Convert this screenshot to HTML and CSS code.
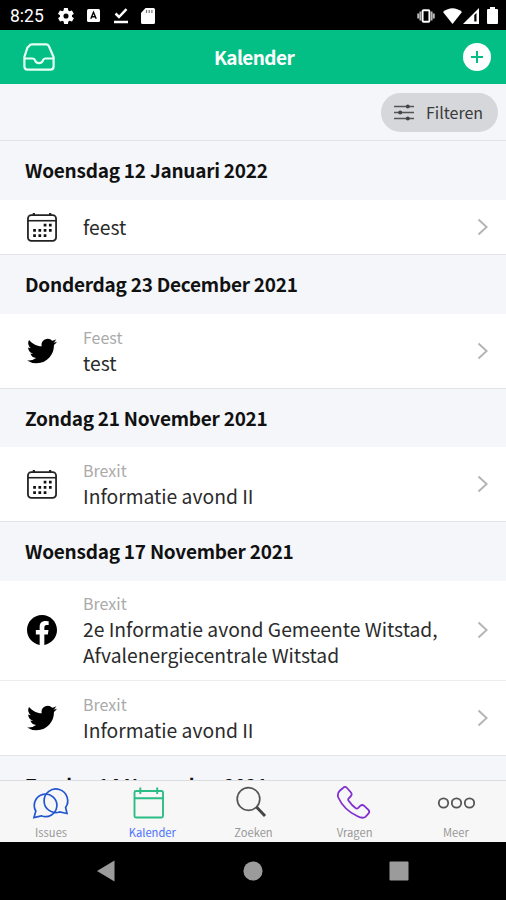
FILE: index.html
```html
<!DOCTYPE html>
<html lang="nl">
<head>
<meta charset="utf-8">
<title>Kalender</title>
<link rel="stylesheet" href="styles.css">
</head>
<body>
<svg class="defs" aria-hidden="true">
  <symbol id="calendar" viewBox="0 0 32 32">
    <g fill="none" stroke="#222" stroke-width="1.9">
      <rect x="1" y="3.4" width="30" height="27.4" rx="3.6"/>
      <path d="M1 9.300h30" stroke-width="1.7"/>
      <path d="M7.3 1v3M24.7 1v3" stroke-width="2.4"/>
    </g>
    <path fill="none" stroke="#111" stroke-width="2.7" stroke-dasharray="2.900 2.7" d="M17.800 14h9M6.600 19.600h20M6.600 25.200h14.400"/>
  </symbol>
  <symbol id="twitter" viewBox="0 0 24 24">
    <path d="M23.95 4.57a10 10 0 0 1-2.82.77 4.96 4.96 0 0 0 2.16-2.72c-.95.55-2 .95-3.13 1.18a4.92 4.92 0 0 0-8.38 4.48C7.69 8.1 4.07 6.13 1.64 3.16a4.92 4.92 0 0 0 1.52 6.57 4.9 4.9 0 0 1-2.23-.61v.06c0 2.38 1.7 4.37 3.95 4.83a5 5 0 0 1-2.21.08 4.94 4.94 0 0 0 4.6 3.42A9.87 9.87 0 0 1 0 19.54a13.99 13.99 0 0 0 7.55 2.21c9.05 0 14-7.5 14-13.98 0-.21 0-.42-.02-.63a9.94 9.94 0 0 0 2.46-2.55z"/>
  </symbol>
  <symbol id="facebook" viewBox="0 0 24 24">
    <path d="M24 12.07C24 5.45 18.63.07 12 .07S0 5.45 0 12.07c0 5.99 4.39 10.95 10.13 11.86v-8.39H7.08v-3.47h3.05V9.43c0-3.01 1.79-4.67 4.53-4.67 1.31 0 2.68.24 2.68.24v2.95h-1.51c-1.49 0-1.95.93-1.95 1.87v2.25h3.32l-.53 3.47h-2.8v8.39C19.61 23.02 24 18.06 24 12.07z"/>
  </symbol>
  <symbol id="chevron" viewBox="0 0 12 18">
    <path d="M1.5 1.5L9.6 9l-8.1 7.5" fill="none" stroke="#b4b4b4" stroke-width="1.9"/>
  </symbol>
</svg>
<div class="screen">
  <div class="status">
    <span class="clock">8:25</span>
    <svg class="st-gear" viewBox="2 2 20 20"><path fill="#fff" d="M19.4 13c0-.3.1-.6.1-1s0-.7-.1-1l2.1-1.600c.2-.2.200-.4.100-.6l-2-3.500c-.1-.2-.4-.3-.6-.2l-2.500 1c-.5-.4-1.100-.7-1.700-1l-.4-2.600c0-.3-.2-.5-.5-.5h-4c-.3 0-.5.2-.5.4l-.4 2.700c-.6.2-1.100.6-1.700 1l-2.500-1c-.2-.1-.5 0-.6.200l-2 3.500c-.1.2-.1.5.1.600L4.500 11c0 .3-.1.6-.1 1s0 .7.1 1l-2.100 1.600c-.2.2-.2.4-.1.600l2 3.500c.1.2.4.3.6.2l2.500-1c.5.4 1.100.7 1.700 1l.4 2.600c0 .3.2.5.5.5h4c.3 0 .5-.2.5-.4l.4-2.700c.6-.2 1.100-.6 1.700-1l2.500 1c.2.1.5 0 .6-.2l2-3.500c.1-.2.1-.5-.1-.600zM12 15.200A3.200 3.200 0 1 1 12 8.800a3.200 3.200 0 0 1 0 6.400z"/></svg>
    <svg class="st-a" viewBox="0 0 13 13"><rect width="13" height="13" rx="1.500" fill="#fff"/><path d="M3.800 9.700L6.500 3.300l2.700 6.400M4.800 7.800h3.400" fill="none" stroke="#000" stroke-width="1.400"/></svg>
    <svg class="st-check" viewBox="0 0 14 16"><path d="M1.500 5.500l3.500 3.500 7.500-7.800M0 14h14" fill="none" stroke="#fff" stroke-width="2.500"/></svg>
    <svg class="st-sd" viewBox="0 0 14 16"><path fill="#fff" d="M4.500 0H12.500Q14 0 14 1.500v13Q14 16 12.500 16h-11Q0 16 0 14.500V5z"/><path d="M5.500 2v3M8.200 2v3M10.900 2v3" stroke="#777" stroke-width="1.200"/></svg>
    <span class="spring"></span>
    <svg class="st-vib" viewBox="0 0 18 14"><rect x="5.600" y="1.200" width="6.800" height="11.600" rx="1" fill="none" stroke="#fff" stroke-width="1.900"/><path d="M3.400 2.500v9M14.600 2.500v9M1.200 4.500v5M16.800 4.500v5" stroke="#bbb" stroke-width="1.900"/></svg>
    <svg class="st-wifi" viewBox="0 0 19 16"><path fill="#fff" d="M0 4Q9.500-3.500 19 4L9.500 16z"/></svg>
    <svg class="st-cell" viewBox="0 0 16 16"><path fill="#fff" fill-rule="evenodd" d="M0 16L16 0v16zM11.300 7v6.500h2.200V5z"/></svg>
    <svg class="st-bat" viewBox="0 0 11 17"><path fill="#fff" d="M3 0h5v2h2q1 0 1 1v13q0 1-1 1H1q-1 0-1-1V3q0-1 1-1h2z"/></svg>
  </div>
  <header class="appbar">
    <svg class="inbox" viewBox="0 0 32 28"><path d="M6.200 3Q7 1.300 9 1.300h14Q25 1.300 25.800 3L30.600 14v9.500q0 3.200-3.200 3.200H4.600q-3.200 0-3.200-3.200V14L4.500 4.500zM1.400 15.500h8.300q1.800 0 2.300 1.800.8 2.900 4 2.900t4-2.900q.5-1.800 2.300-1.800h8.300" fill="none" stroke="#e6fff3" stroke-width="2.200"/></svg>
    <h1>Kalender</h1>
    <svg class="add" viewBox="0 0 28 28"><circle cx="14" cy="14" r="14" fill="#fff"/><path d="M8 14h12M14 8v12" stroke="#03bf86" stroke-width="2"/></svg>
  </header>
  <div class="filterbar">
    <button class="filter">
      <svg viewBox="0 0 20 17"><path d="M0 2.500h20M0 8.500h20M0 14.500h20" stroke="#555" stroke-width="1.300"/><circle cx="13.800" cy="2.500" r="2" fill="#444"/><circle cx="6.200" cy="8.500" r="2" fill="#444"/><circle cx="13.800" cy="14.500" r="2" fill="#444"/></svg>
      <span>Filteren</span>
    </button>
  </div>
  <main class="list">
    <h2>Woensdag 12 Januari 2022</h2>
    <div class="row single"><svg class="ico"><use href="#calendar"/></svg><div class="txt"><p>feest</p></div><svg class="chev"><use href="#chevron"/></svg></div>
    <h2>Donderdag 23 December 2021</h2>
    <div class="row"><svg class="ico"><use href="#twitter"/></svg><div class="txt"><small>Feest</small><p>test</p></div><svg class="chev"><use href="#chevron"/></svg></div>
    <h2>Zondag 21 November 2021</h2>
    <div class="row"><svg class="ico"><use href="#calendar"/></svg><div class="txt"><small>Brexit</small><p>Informatie avond II</p></div><svg class="chev"><use href="#chevron"/></svg></div>
    <h2>Woensdag 17 November 2021</h2>
    <div class="row double"><svg class="ico"><use href="#facebook"/></svg><div class="txt"><small>Brexit</small><p>2e Informatie avond Gemeente Witstad,<br>Afvalenergiecentrale Witstad</p></div><svg class="chev"><use href="#chevron"/></svg></div>
    <div class="row divided"><svg class="ico"><use href="#twitter"/></svg><div class="txt"><small>Brexit</small><p>Informatie avond II</p></div><svg class="chev"><use href="#chevron"/></svg></div>
    <h2>Zondag 14 November 2021</h2>
  </main>
  <nav class="tabs">
    <a><svg viewBox="1.500 0 38 34"><g fill="none" stroke="#2457cf" stroke-width="1.700"><path d="M3.500 31.500l1.800-6.500a11.300 11.300 0 1 1 5.500 4.800z"/><path d="M36.500 27.500l-1.400-6a11.800 11.800 0 1 0-6 4.500z"/></g></svg><span>Issues</span></a>
    <a class="on"><svg viewBox="3 0 38 34"><g fill="none" stroke="#2bbd86" stroke-width="1.900"><rect x="4.500" y="5" width="28.500" height="26.500" rx="1.500"/><path d="M4.500 12.200h28.500M10.300 1.500v6.500M27.200 1.500v6.500"/></g></svg><span>Kalender</span></a>
    <a><svg viewBox="1 0 38 34"><circle cx="15.500" cy="13" r="11.300" fill="none" stroke="#555" stroke-width="1.700"/><path d="M23.500 21l8.500 9" stroke="#444" stroke-width="2.900"/></svg><span>Zoeken</span></a>
    <a><svg viewBox="1 0 38 34"><path d="M5 4.500L8 2Q10-.2 12 2l4 4.500q1.500 2-.5 4l-2 2q-.8 1 .3 2.600 3 4.300 6.700 7 1.500 1 2.500 0l2.200-2.200q2-1.700 4 0l4 3.700q2 2 .2 4l-2.700 3Q28 33 22.500 30.300 9 24 3.300 11.500 1.800 7.500 5 4.500z" fill="none" stroke="#8230cf" stroke-width="1.800"/></svg><span>Vragen</span></a>
    <a><svg viewBox="-1 0 38 34"><g fill="none" stroke="#555" stroke-width="1.800"><circle cx="5.500" cy="17" r="4.700"/><circle cx="18.500" cy="17" r="4.700"/><circle cx="31.500" cy="17" r="4.700"/></g></svg><span>Meer</span></a>
  </nav>
  <div class="sysnav">
    <svg viewBox="0 0 20 22"><path d="M1 11L18.500.5v21z" fill="#9b9b9b"/></svg>
    <svg viewBox="0 0 20 20"><circle cx="10" cy="10" r="9.600" fill="#9b9b9b"/></svg>
    <svg viewBox="0 0 20 20"><rect x=".5" y=".5" width="19" height="19" rx="1" fill="#9b9b9b"/></svg>
  </div>
</div>
</body>
</html>
```
FILE: styles.css
```css
* { box-sizing: border-box; margin: 0; padding: 0; }
body {
  width: 506px;
  height: 900px;
  overflow: hidden;
  background: #000;
  font-family: "Noto Sans CJK JP", "Noto Sans", sans-serif;
  color: #2b2b2b;
}
svg { display: block; flex: none; }
.defs { display: none; }
.screen { height: 900px; display: flex; flex-direction: column; }

.status {
  height: 30px;
  display: flex;
  align-items: center;
  padding: 1px 8px 0 10px;
  background: #000;
}
.clock { font: 17.5px/20px Roboto, sans-serif; color: #fff; width: 48px; }
.spring { flex: 1; }
.st-gear { width: 16px; height: 16px; }
.st-a { width: 13px; height: 13px; margin-left: 13px; }
.st-check { width: 14px; height: 16px; margin-left: 14px; }
.st-sd { width: 14px; height: 16px; margin-left: 13px; }
.st-vib { width: 18px; height: 14px; }
.st-wifi { width: 19px; height: 16px; margin-left: 8px; }
.st-cell { width: 16px; height: 16px; margin-left: 1px; }
.st-bat { width: 11px; height: 17px; margin-left: 8px; }

.appbar {
  height: 54px;
  display: flex;
  align-items: center;
  justify-content: space-between;
  padding: 0 15px 0 23px;
  background: #03bf86;
}
.inbox { width: 32px; height: 28px; }
.add { width: 28px; height: 28px; }
h1 {
  padding-right: 10px;
  font-size: 19px;
  line-height: 28px;
  font-weight: 700;
  letter-spacing: -.6px;
  color: #fff;
}

.filterbar {
  height: 56.3px;
  display: flex;
  justify-content: flex-end;
  align-items: center;
  padding-right: 8px;
  background: #f4f6fa;
}
.filter {
  width: 117px;
  height: 39px;
  display: flex;
  align-items: center;
  gap: 12px;
  padding: 0 0 0 13px;
  border: 0;
  border-radius: 20px;
  background: #d5d7da;
  font-family: inherit;
  font-size: 16px;
  color: #3a3a3a;
}
.filter svg { width: 20px; height: 17px; }
.filter span { line-height: 24px; }

.list { flex: 1; overflow: hidden; background: #fff; }
h2 {
  height: 59.4px;
  padding-left: 25px;
  border-top: 1px solid #e2e4e8;
  background: #f4f6fa;
  font-size: 19px;
  line-height: 58px;
  font-weight: 700;
  letter-spacing: -.24px;
  color: #111;
  white-space: nowrap;
}
.row {
  height: 74.2px;
  display: flex;
  align-items: center;
  padding: 0 17px 0 27px;
}
.single { height: 54.6px; }
.double { height: 99.3px; }
.divided { height: 74.6px; border-top: 1px solid #ececee; }
.ico { width: 30px; height: 30px; fill: #000; }
.txt { flex: 1; margin-left: 26px; white-space: nowrap; }
.txt small {
  display: block;
  margin-bottom: 3px;
  font-size: 16px;
  line-height: 22px;
  color: #aaa;
}
.txt p { font-size: 19.3px; line-height: 25.5px; }
.single p { padding-top: 2px; }
.chev { width: 12px; height: 18px; }

.tabs {
  height: 62px;
  display: grid;
  grid-template-columns: repeat(5, 1fr);
  background: #f7f7f7;
  border-top: 1px solid #dcdde0;
}
.tabs a {
  display: flex;
  flex-direction: column;
  align-items: center;
  padding: 5px 0 0 1px;
}
.tabs svg { width: 38px; height: 34px; }
.tabs span { font-size: 11.2px; line-height: 16px; margin-top: 4px; color: #999; }
.tabs .on span { color: #4c72ff; }

.sysnav {
  height: 58px;
  display: flex;
  justify-content: space-between;
  align-items: center;
  padding: 0 97px 0 96px;
  background: #000;
}
.sysnav svg { width: 20px; height: 22px; }
```
